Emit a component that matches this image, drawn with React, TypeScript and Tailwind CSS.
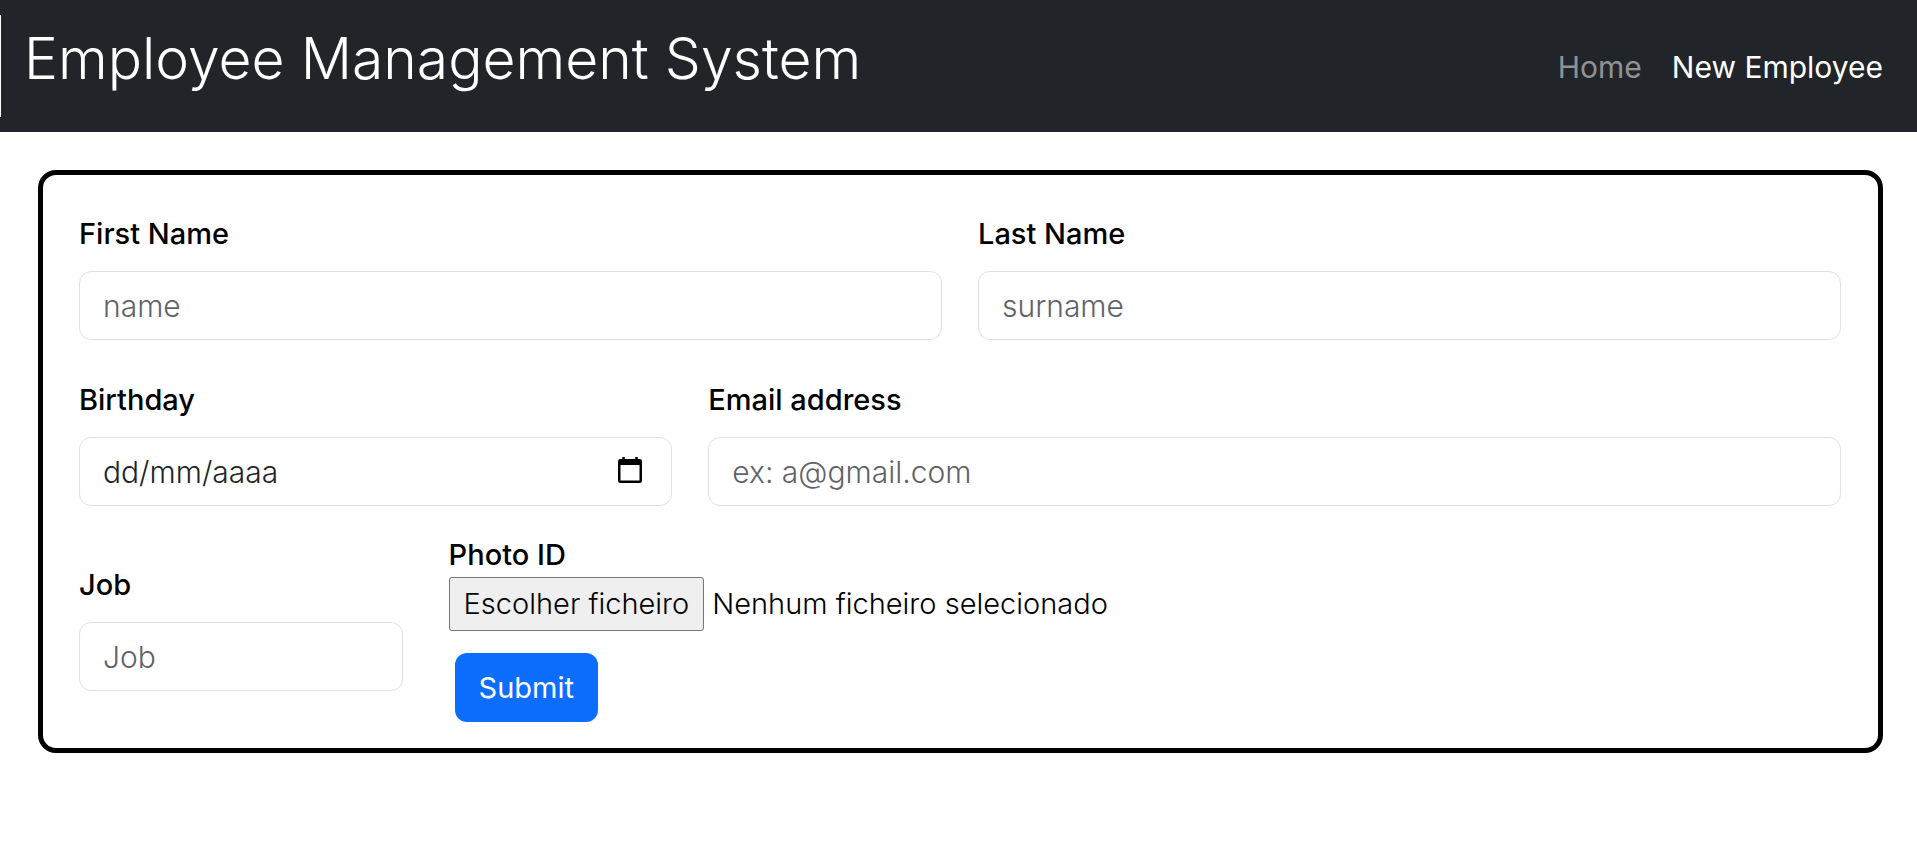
import type { ComponentProps, ReactNode } from "react";

const inputClass =
  "h-[69px] w-full rounded-xl border border-[#dee2e6] bg-white px-[23px] text-[30px] font-light text-[#212529] outline-none focus:border-[#86b7fe]";

type FieldProps = ComponentProps<"input"> & { id: string; label: string; children?: ReactNode };

function Field({ id, label, children, className = "placeholder:text-[#5f6369]", ...rest }: FieldProps) {
  return (
    <div>
      <label htmlFor={id} className="mb-3.5 block leading-[46px] font-medium text-black">
        {label}
      </label>
      <div className="relative">
        <input id={id} className={`${inputClass} ${className}`} {...rest} />
        {children}
      </div>
    </div>
  );
}

function CalendarIcon() {
  return (
    <svg viewBox="0 0 24 26" className="h-[26px] w-6" fill="none" aria-hidden="true">
      <rect x="1.25" y="3.25" width="21.5" height="21.5" rx="1" stroke="#000" strokeWidth="2.5" />
      <path d="M1 3h22v5H1z" fill="#000" />
      <path d="M5.5 0v4M18.5 0v4" stroke="#000" strokeWidth="2.5" />
    </svg>
  );
}

export default function App() {
  return (
    <div className="font-[Inter,'Open_Sans',sans-serif] text-[29px] leading-[44px]">
      <header className="flex items-center justify-between bg-[#212529] py-[15px] pr-[34px]">
        <div className="border-l border-white pt-2 pb-[22px] pl-[23px]">
          <h1 className="text-[57px] leading-[72px] font-light text-white">Employee Management System</h1>
        </div>
        <nav className="flex gap-[30px] pt-0.5 text-[30px]">
          <a href="#home" className="text-[#909294]">
            Home
          </a>
          <a href="#new" aria-current="page" className="text-white">
            New Employee
          </a>
        </nav>
      </header>

      <main className="pt-[38px] pr-[34px] pl-[38px]">
        <form
          className="rounded-[18px] border-[5px] border-black pt-9 pr-[19px] pb-[26px] pl-[18px]"
          onSubmit={(e) => e.preventDefault()}
        >
          <div className="mb-[37px] flex">
            <div className="w-1/2 px-[18px]">
              <Field id="first-name" label="First Name" type="text" placeholder="name" />
            </div>
            <div className="w-1/2 px-[18px]">
              <Field id="last-name" label="Last Name" type="text" placeholder="surname" />
            </div>
          </div>

          <div className="mb-[27px] flex">
            <div className="w-[35%] px-[18px]">
              <Field
                id="birthday"
                label="Birthday"
                type="text"
                inputMode="numeric"
                placeholder="dd/mm/aaaa"
                className="placeholder:text-[#212529]"
              >
                <button
                  type="button"
                  aria-label="Open calendar"
                  className="absolute inset-y-0 right-[30px] flex items-center pb-1"
                >
                  <CalendarIcon />
                </button>
              </Field>
            </div>
            <div className="w-[65%] px-[18px]">
              <Field id="email" label="Email address" type="email" placeholder="ex: a@gmail.com" />
            </div>
          </div>

          <div className="flex items-start">
            <div className="w-1/5 px-[18px] pt-[29px]">
              <Field id="job" label="Job" type="text" placeholder="Job" />
            </div>
            <div className="flex flex-col items-start pl-7">
              <label htmlFor="photo" className="font-medium text-black">
                Photo ID
              </label>
              <div className="flex items-center gap-2 font-light text-black">
                <input id="photo" type="file" className="peer sr-only" />
                <label
                  htmlFor="photo"
                  className="cursor-pointer rounded-[3px] border border-[#767676] bg-[#efefef] px-3.5 py-1 peer-focus-visible:outline-2"
                >
                  Escolher ficheiro
                </label>
                <span>Nenhum ficheiro selecionado</span>
              </div>
              <button
                type="submit"
                className="mt-[22px] ml-1.5 h-[69px] rounded-xl bg-[#0d6efd] px-6 text-white"
              >
                Submit
              </button>
            </div>
          </div>
        </form>
      </main>
    </div>
  );
}
